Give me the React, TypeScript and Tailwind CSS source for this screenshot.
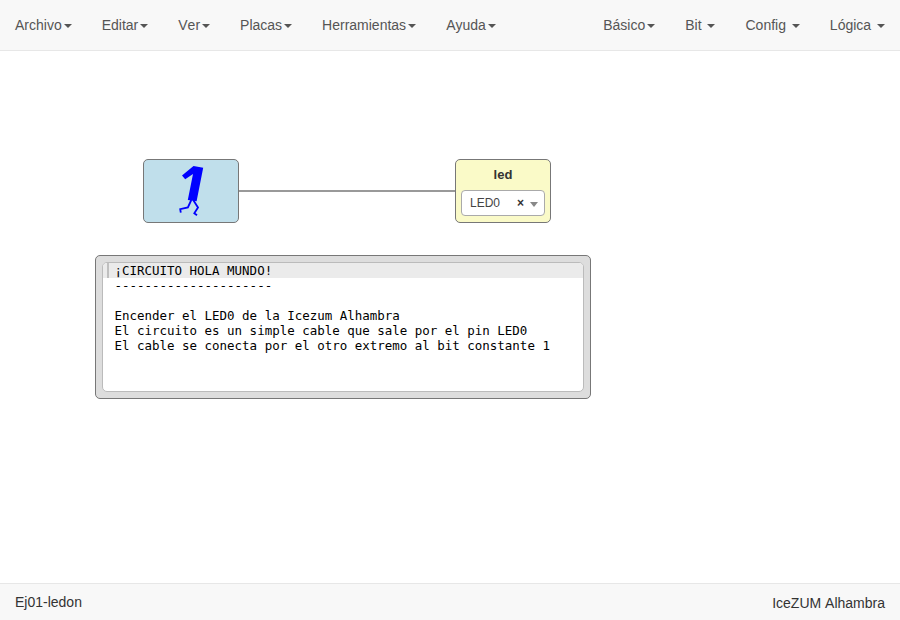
const leftMenus = ["Archivo", "Editar", "Ver", "Placas", "Herramientas", "Ayuda"];
const rightMenus = ["Básico", "Bit ", "Config ", "Lógica "];

const noteLines = [
  "¡CIRCUITO HOLA MUNDO!",
  "---------------------",
  "",
  "Encender el LED0 de la Icezum Alhambra",
  "El circuito es un simple cable que sale por el pin LED0",
  "El cable se conecta por el otro extremo al bit constante 1",
];

function Menu({ label }: { label: string }) {
  return (
    <li className="px-[15px] py-[15px] text-sm leading-5 whitespace-pre text-[#555]">
      {label}
      <span className="ml-[2px] inline-block h-0 w-0 border-x-4 border-t-4 border-x-transparent border-t-[#555] align-middle" />
    </li>
  );
}

function RunningOne() {
  return (
    <svg className="h-full w-full" viewBox="0 0 94 62" fill="none">
      <path d="M38 15.6 L49.5 6 L59.2 7.8 L52.6 41.2 L43.8 40 L49 14 L41.2 19.2 Z" fill="#00f" />
      <path d="M47.3 40 L43.9 47.4 L36.2 49.2 L36.8 52.6" stroke="#00f" strokeWidth="1.8" />
      <path d="M49.2 40 L54 47.4 L50.3 53.2 L53 55.2" stroke="#00f" strokeWidth="1.8" />
    </svg>
  );
}

export default function App() {
  return (
    <div className="flex h-[620px] w-[900px] flex-col overflow-hidden bg-white font-['Liberation_Sans',Arial,sans-serif] text-[#333] [font-kerning:none]">
      <nav className="flex h-[51px] shrink-0 justify-between border-b border-[#e7e7e7] bg-[#f8f8f8]">
        <ul className="flex">{leftMenus.map((m) => <Menu key={m} label={m} />)}</ul>
        <ul className="flex">{rightMenus.map((m) => <Menu key={m} label={m} />)}</ul>
      </nav>

      <main className="relative flex-1">
        <div className="absolute top-[139px] left-[238px] h-[2px] w-[218px] bg-[#999]" />

        <div className="absolute top-[108px] left-[143px] h-[64px] w-[96px] rounded-[5px] border border-[#777] bg-[#c0dfeb]">
          <RunningOne />
        </div>

        <div className="absolute top-[108px] left-[455px] flex h-[64px] w-[96px] flex-col items-center rounded-[5px] border border-[#777] bg-[#fafac8]">
          <div className="h-[30px] pt-[5px] text-[13px] leading-5 font-bold">led</div>
          <div className="flex h-[26px] w-[84px] items-center rounded-[4px] border border-[#aaa] bg-white pr-[6px] pl-[8px] text-xs text-[#444]">
            <span className="flex-1">LED0</span>
            <span className="mr-[6px] font-bold text-[#333]">×</span>
            <span className="mt-[3px] h-0 w-0 border-x-4 border-t-[5px] border-x-transparent border-t-[#888]" />
          </div>
        </div>

        <div className="absolute top-[204px] left-[95px] h-[144px] w-[496px] rounded-[5px] border border-[#777] bg-[#ddd] p-[6px]">
          <div className="h-full overflow-hidden rounded-[5px] border border-[#bbb] bg-white font-['DejaVu_Sans_Mono',monospace] text-[12.47px] leading-[15px] text-black">
            {noteLines.map((line, i) => (
              <div key={i} className={i === 0 ? "flex h-[15px] bg-[#ebebeb] pl-[4px]" : "h-[15px] pl-[11.5px] whitespace-pre"}>
                {i === 0 && <span className="mr-[5.5px] w-[2px] bg-[#bfbfbf]" />}
                {line}
              </div>
            ))}
          </div>
        </div>
      </main>

      <footer className="flex h-[37px] shrink-0 justify-between border-t border-[#e7e7e7] bg-[#f8f8f8] px-[15px] text-sm leading-5">
        <span className="pt-[8px]">Ej01-ledon</span>
        <span className="pt-[9px]">IceZUM Alhambra</span>
      </footer>
    </div>
  );
}
